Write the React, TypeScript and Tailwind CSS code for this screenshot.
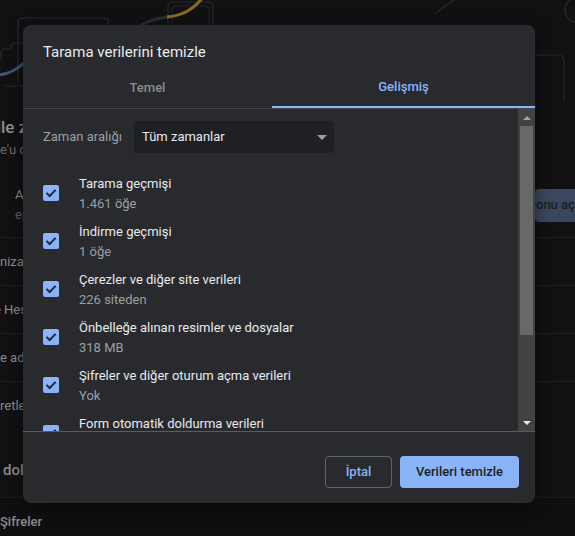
import React from "react";

const items: { t: string; s: string }[] = [
  { t: "Tarama geçmişi", s: "1.461 öğe" },
  { t: "İndirme geçmişi", s: "1 öğe" },
  { t: "Çerezler ve diğer site verileri", s: "226 siteden" },
  { t: "Önbelleğe alınan resimler ve dosyalar", s: "318 MB" },
  { t: "Şifreler ve diğer oturum açma verileri", s: "Yok" },
  { t: "Form otomatik doldurma verileri", s: "Yok" },
  { t: "Site ayarları", s: "Yok" },
  { t: "Barındırılan uygulama verileri", s: "1 uygulama (Chrome Web Mağazası)" },
];

function CheckBox() {
  return (
    <div className="w-[16px] h-[16px] shrink-0 rounded-[2px] bg-[#8ab4f8] flex items-center justify-center">
      <svg width="16" height="16" viewBox="0 0 16 16">
        <path d="M3.4 7.9 L6.6 11 L12.6 4.9" fill="none" stroke="#27282b" strokeWidth="2" />
      </svg>
    </div>
  );
}

function Illustration() {
  return (
    <svg className="block shrink-0" width="575" height="113" viewBox="0 0 575 113">
      <path d="M18 83 V22 Q18 18 22 18 H104 Q108 18 108 22 V40" fill="none" stroke="#2a2b2e" strokeWidth="1.2" />
      <path d="M5 86 H60" fill="none" stroke="#2a2b2e" strokeWidth="1.2" />
      <path d="M26 43 H15 Q11 43 11 47 V49 H4 Q1 49 1 53 V60" fill="none" stroke="#2a2b2e" strokeWidth="1.2" />
      <path d="M-2 75 Q12 74 24 63" fill="none" stroke="#3e5678" strokeWidth="3" />
      <path d="M168 40 V7 Q168 2 173 2 H208 Q213 2 213 7 V40" fill="none" stroke="#2a2b2e" strokeWidth="1.2" />
      <path d="M172 40 V10 Q172 6 176 6 H205 Q209 6 209 10 V40" fill="none" stroke="#232427" strokeWidth="1.2" />
      <path d="M138 27 Q150 19 168 17" fill="none" stroke="#2c2d30" strokeWidth="3" />
      <path d="M167 17 Q190 15 203 -3" fill="none" stroke="#8a6c1e" strokeWidth="3" />
      <path d="M436 13 L455 -1" fill="none" stroke="#2a2b2e" strokeWidth="1.2" />
      <circle cx="578" cy="10" r="13" fill="none" stroke="#2a2b2e" strokeWidth="1.2" />
      <path d="M520 55 H558 Q564 55 564 61 V101" fill="none" stroke="#2a2b2e" strokeWidth="1.2" />
    </svg>
  );
}

function Background() {
  return (
    <div className="w-[640px] flex flex-col text-[13px] text-[#8b8c8f]">
      <div className="h-[430px] bg-[#111113] flex flex-col">
        <Illustration />
        <div className="h-[30px] flex items-center whitespace-nowrap text-[17px] font-medium text-[#8e8f92] pl-[1px]">
          <span className="flex w-0 justify-end">Chrome'u Google i</span>
          <span>le zenginleştirin</span>
        </div>
        <div className="h-[14px] flex items-center whitespace-nowrap text-[#6b6c6f]">
          <span className="flex w-0 justify-end">Chrom</span>
          <span>e'u cihazlarınızda senkronize edin ve kişiselleştirin</span>
        </div>
        <div className="h-[80px] pt-[16px] flex items-center">
          <div className="w-[535px] shrink-0 pl-[15px] flex flex-col whitespace-nowrap">
            <span className="leading-[20px] text-[#8e8f92]">Ahmet Yılmaz</span>
            <span className="leading-[20px] text-[#606164]">eposta@gmail.com</span>
          </div>
          <div className="h-[33px] rounded-[4px] bg-[#3a475e] flex items-center pl-[1px] pr-[16px] whitespace-nowrap font-medium text-[#1a1d22]">
            <span className="flex w-0 justify-end">Senkronizasy</span>
            <span>onu aç</span>
          </div>
        </div>
        <div className="h-[48px] border-t border-[#1e1f22] flex items-center whitespace-nowrap">
          <span className="flex w-0 justify-end">Senkro</span>
          <span>nizasyon ve Google hizmetleri</span>
        </div>
        <div className="h-[48px] border-t border-[#1e1f22] flex items-center whitespace-nowrap pl-[4px]">
          <span className="flex w-0 justify-end">Google&nbsp;</span>
          <span>Hesabınızı yönetin</span>
        </div>
        <div className="h-[48px] border-t border-[#1e1f22] flex items-center whitespace-nowrap">
          <span className="flex w-0 justify-end">Chrom</span>
          <span>e adı ve resmi</span>
        </div>
        <div className="h-[48px] border-t border-[#1e1f22] flex items-center whitespace-nowrap">
          <span className="flex w-0 justify-end">Yer işa</span>
          <span>retlerini ve ayarları içe aktar</span>
        </div>
      </div>
      <div className="h-[67px] pt-[14px] bg-[#111112] flex items-center whitespace-nowrap pl-[3px] text-[15px] font-medium">
        <span className="flex w-0 justify-end">Otomatik&nbsp;</span>
        <span>doldurma</span>
      </div>
      <div className="h-[48px] border-t border-[#1a1a1c] flex items-center whitespace-nowrap font-medium text-[#8a8b8e]">
        Şifreler
      </div>
    </div>
  );
}

function Dialog() {
  return (
    <div className="absolute left-[23px] top-[25px] w-[512px] h-[478px] rounded-[8px] bg-[#292a2d] flex flex-col overflow-hidden shadow-[0_4px_16px_rgba(0,0,0,0.5)]">
      <div className="h-[43px] shrink-0 pt-[15px] px-[20px] text-[15px] leading-[24px] text-[#e8eaed]">
        Tarama verilerini temizle
      </div>
      <div className="h-[41px] shrink-0 flex border-b border-[#45464a] text-[13px] font-medium">
        <div className="w-[249px] h-[40px] flex items-center justify-center text-[#8b8d90]">Temel</div>
        <div className="flex-1 h-[40px] flex items-center justify-center text-[#8ab4f8] border-b-2 border-[#8ab4f8]">
          Gelişmiş
        </div>
      </div>
      <div className="flex-1 min-h-0 flex">
        <div className="flex-1 min-w-0 overflow-hidden pl-[20px] pt-[12px] text-[13px]">
          <div className="flex items-center h-[32px]">
            <div className="w-[91px] shrink-0 text-[#9aa0a6]">Zaman aralığı</div>
            <div className="w-[200px] h-[32px] rounded-[4px] bg-[#1f2023] flex items-center justify-between pl-[8px] pr-[7px] text-[#e8eaed]">
              <span>Tüm zamanlar</span>
              <svg width="10" height="5" viewBox="0 0 10 5">
                <path d="M0 0 H10 L5 5 Z" fill="#9da0a5" />
              </svg>
            </div>
          </div>
          <div className="h-[16px]" />
          {items.map((it) => (
            <div key={it.t} className="h-[48px] flex items-center">
              <CheckBox />
              <div className="ml-[20px] flex flex-col whitespace-nowrap">
                <span className="leading-[20px] text-[#e8eaed]">{it.t}</span>
                <span className="leading-[19px] text-[#9aa0a6]">{it.s}</span>
              </div>
            </div>
          ))}
        </div>
        <div className="w-[17px] shrink-0 bg-[#424242] flex flex-col">
          <div className="h-[17px] flex items-center justify-center">
            <svg width="8" height="4" viewBox="0 0 8 4">
              <path d="M4 0 L8 4 H0 Z" fill="#a3a3a3" />
            </svg>
          </div>
          <div className="flex-1 px-[2px]">
            <div className="h-[209px] bg-[#686868]" />
          </div>
          <div className="h-[17px] flex items-center justify-center">
            <svg width="8" height="4" viewBox="0 0 8 4">
              <path d="M0 0 H8 L4 4 Z" fill="#ececec" />
            </svg>
          </div>
        </div>
      </div>
      <div className="h-[72px] shrink-0 border-t border-[#5a5c60] flex justify-end items-start pt-[24px] pr-[16px] gap-[8px] text-[13px] font-medium">
        <div className="w-[67px] h-[32px] rounded-[4px] border border-[#5f6368] flex items-center justify-center text-[#8ab4f8]">
          İptal
        </div>
        <div className="w-[119px] h-[32px] rounded-[4px] bg-[#8ab4f8] flex items-center justify-center text-[#202124]">
          Verileri temizle
        </div>
      </div>
    </div>
  );
}

export default function App() {
  return (
    <div className="relative w-[575px] h-[536px] overflow-hidden bg-[#0f0f10] font-['Roboto',sans-serif]">
      <Background />
      <Dialog />
    </div>
  );
}
